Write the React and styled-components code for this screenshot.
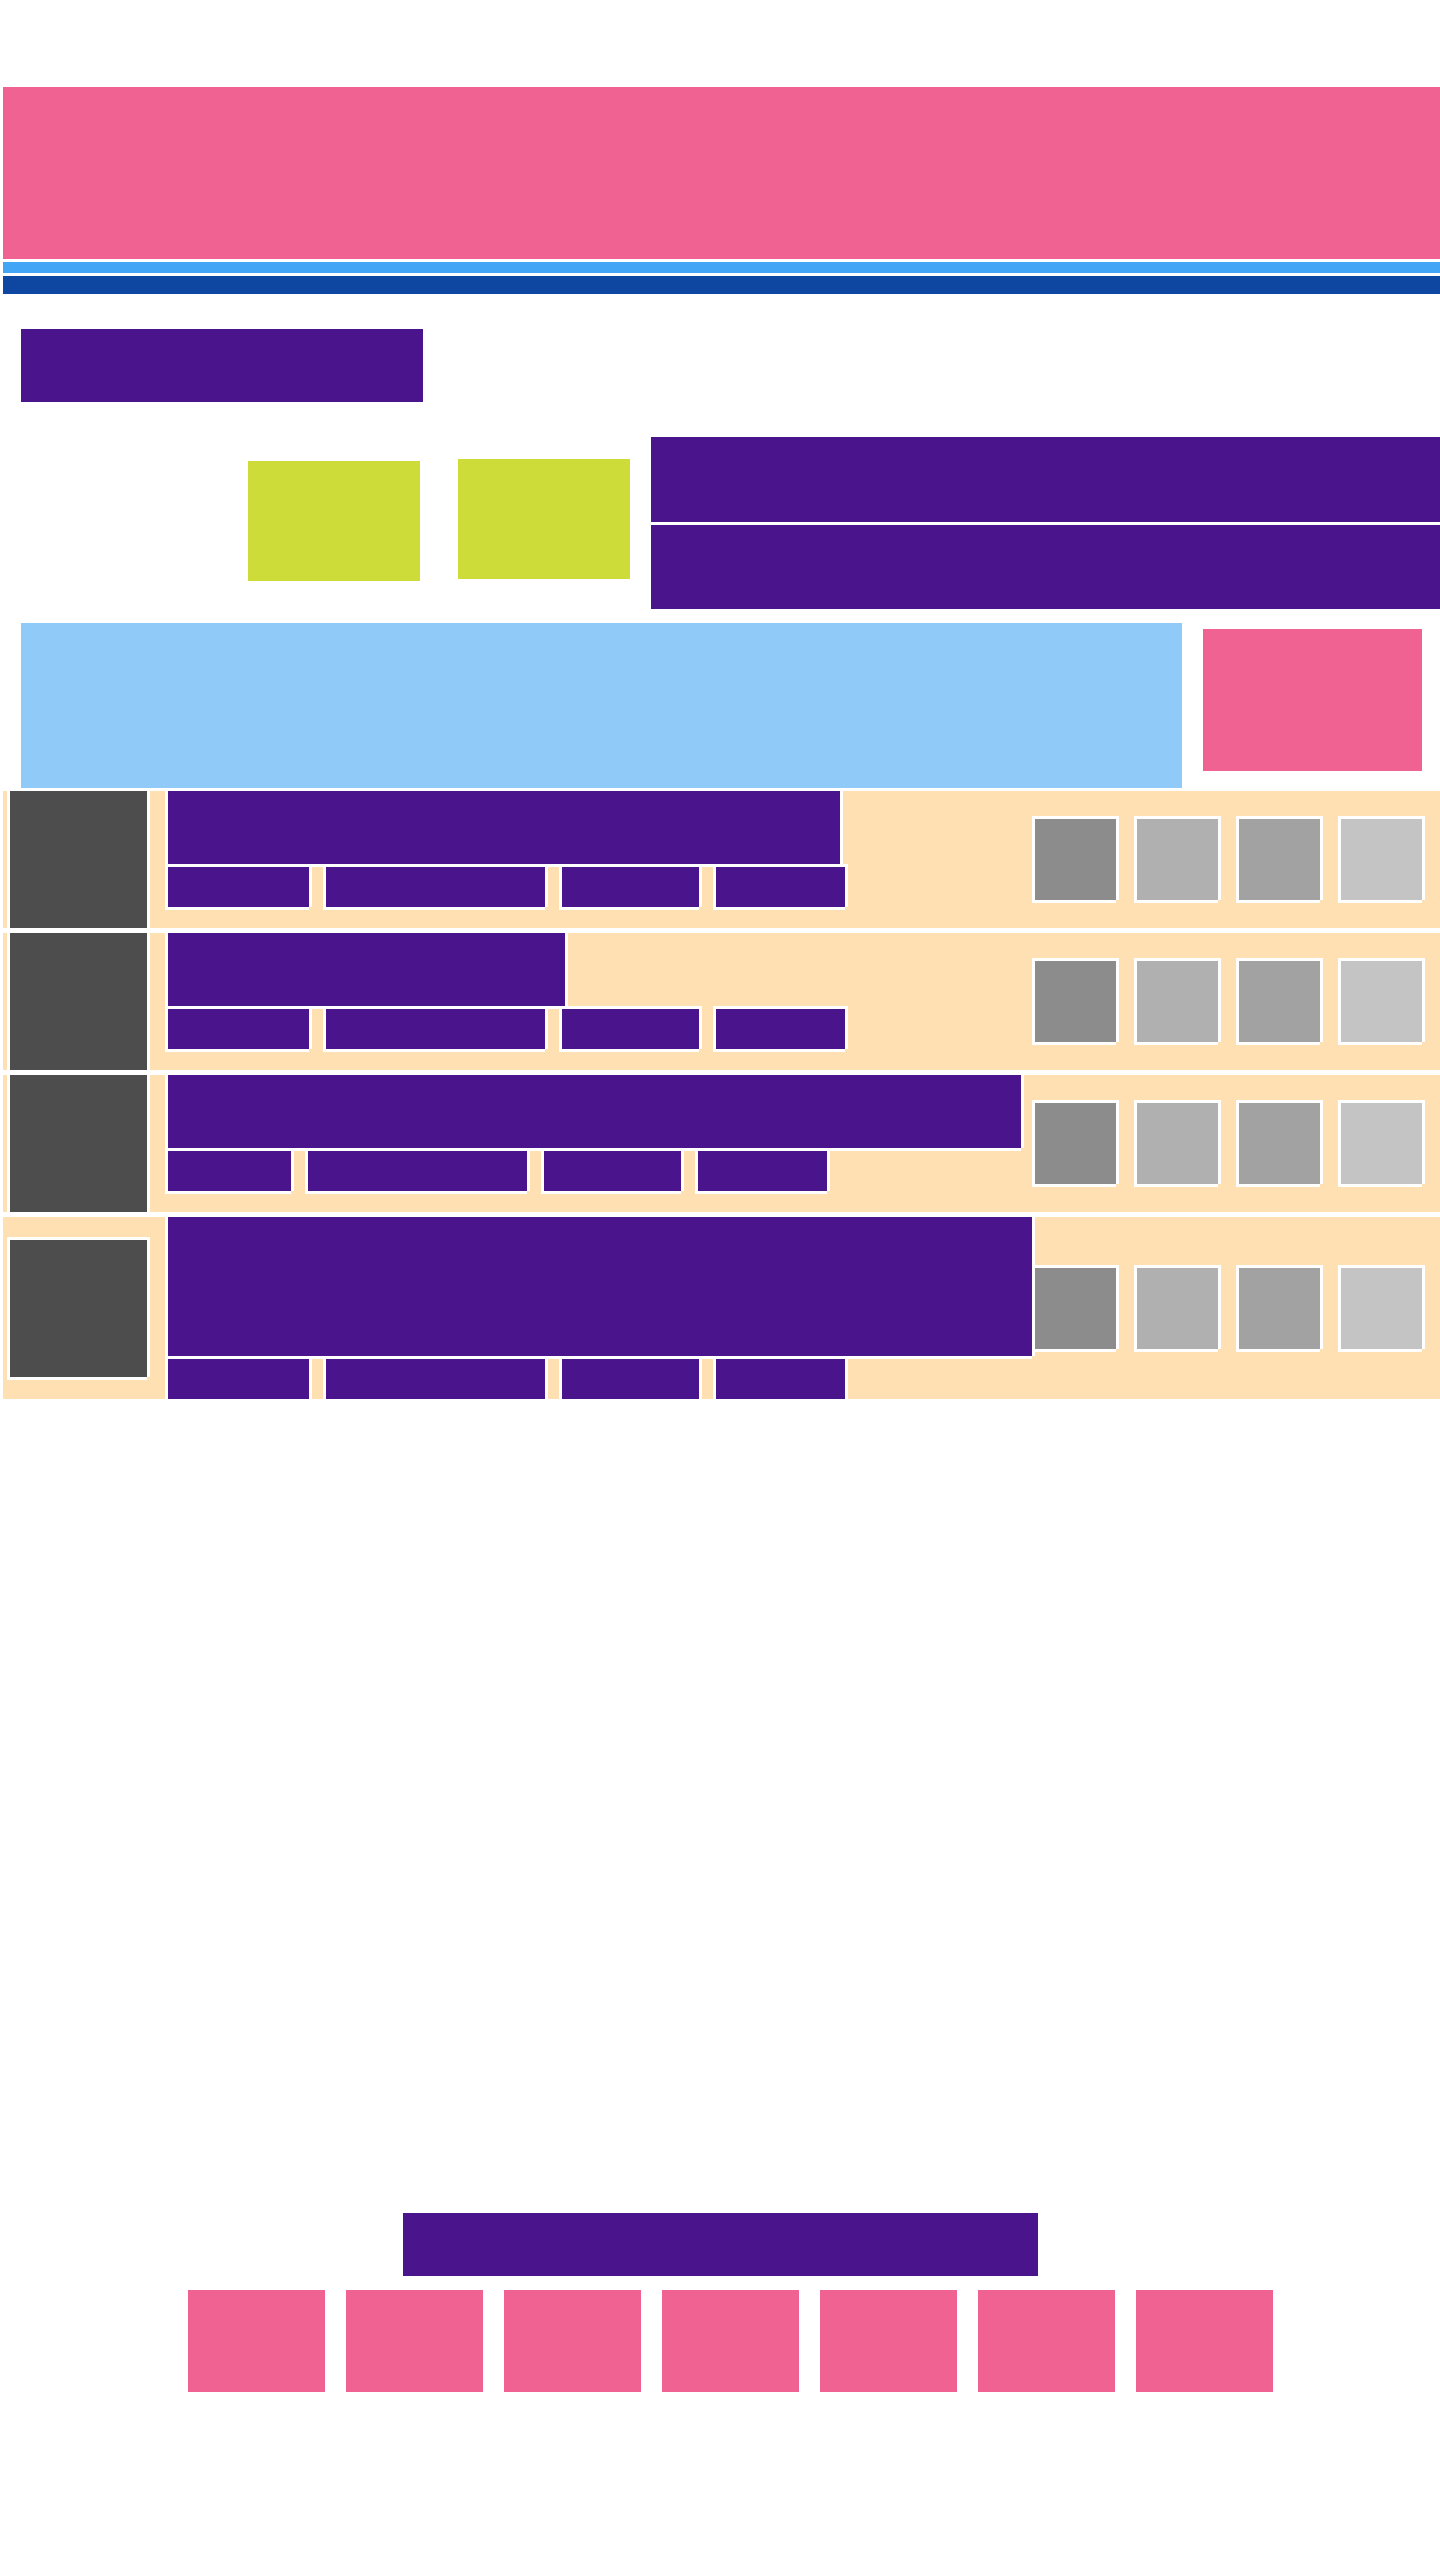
import React from "react";
import styled, { createGlobalStyle, css } from "styled-components";

const rows = [
  { titleWidth: 672, titleHeight: 73, tags: [141, 219, 137, 129] },
  { titleWidth: 397, titleHeight: 73, tags: [141, 219, 137, 129] },
  { titleWidth: 853, titleHeight: 73, tags: [123, 219, 137, 129] },
  { titleWidth: null, titleHeight: 139, tags: [141, 219, 137, 129] },
];

const thumbs = ["#8c8c8c", "#b0b0b0", "#a2a2a2", "#c4c4c4"];
const pages = [1, 2, 3, 4, 5, 6, 7];

const App = () => {
  return (
    <>
      <GlobalStyle />
      <Page>
        <Header />
        <Stripe $color="#42a5f5" $height={11} />
        <Stripe $color="#0d47a1" $height={18} />

        <Intro>
          <PageTitle />
        </Intro>

        <Feature>
          <Badge $offset={24} $left={245} />
          <Badge $offset={22} $left={38} />
          <Stack>
            <StackItem $height={85} />
            <StackItem $height={84} />
          </Stack>
        </Feature>

        <Hero>
          <Banner />
          <Promo />
        </Hero>

        <List>
          {rows.map((row, rowIndex) => {
            return (
              <Row key={rowIndex}>
                <Avatar />
                <Content>
                  <Title
                    $height={row.titleHeight}
                    style={row.titleWidth ? { width: `${row.titleWidth}px` } : undefined}
                  />
                  <Tags>
                    {row.tags.map((width, tagIndex) => (
                      <Tag key={tagIndex} style={{ width: `${width}px` }} />
                    ))}
                  </Tags>
                </Content>
                <Thumbs>
                  {thumbs.map((color, thumbIndex) => (
                    <Thumb key={thumbIndex} $color={color} />
                  ))}
                </Thumbs>
              </Row>
            );
          })}
        </List>

        <Footer>
          <FooterBar />
          <Pager>
            {pages.map((page) => (
              <PageButton key={page} />
            ))}
          </Pager>
        </Footer>
      </Page>
    </>
  );
};

export default App;

const GlobalStyle = createGlobalStyle`
  * {
    box-sizing: border-box;
  }
  body {
    margin: 0;
    background: #ffffff;
    font-family: "Liberation Sans", Arial, sans-serif;
  }
  #root {
    min-height: 2560px;
  }
`;

// white edge with the bottom-right corner left open
const edge = css`
  box-shadow: -3px -3px 0 #fff, 3px -3px 0 #fff, -3px 3px 0 #fff,
    3px 0 0 #fff, 0 3px 0 #fff;
`;

const Page = styled.div`
  width: 1440px;
  padding: 87px 0 0 3px;
`;

const Header = styled.header`
  height: 172px;
  background: #f06292;
`;

const Stripe = styled.div`
  margin-top: 3px;
  height: ${(p) => p.$height}px;
  background: ${(p) => p.$color};
`;

const Intro = styled.section`
  padding: 35px 0 0 18px;
`;

const PageTitle = styled.div`
  width: 402px;
  height: 73px;
  background: #4a148c;
`;

const Feature = styled.section`
  display: flex;
  align-items: flex-start;
  margin-top: 35px;
`;

const Badge = styled.div`
  width: 172px;
  height: 120px;
  margin-top: ${(p) => p.$offset}px;
  margin-left: ${(p) => p.$left}px;
  background: #cddc39;
`;

const Stack = styled.div`
  flex: 1;
  display: flex;
  flex-direction: column;
  gap: 3px;
  margin-left: 21px;
`;

const StackItem = styled.div`
  height: ${(p) => p.$height}px;
  background: #4a148c;
`;

const Hero = styled.section`
  display: flex;
  align-items: flex-start;
  gap: 21px;
  margin-top: 14px;
  padding: 0 18px 0 18px;
`;

const Banner = styled.div`
  flex: 1;
  height: 165px;
  background: #90caf9;
`;

const Promo = styled.div`
  width: 219px;
  height: 142px;
  margin-top: 6px;
  background: #f06292;
`;

const List = styled.section`
  display: flex;
  flex-direction: column;
  gap: 5px;
  margin-top: 3px;
`;

const Row = styled.div`
  display: flex;
  align-items: flex-start;
  padding: 0 18px 0 7px;
  background: #ffe0b2;
`;

const Avatar = styled.div`
  flex: none;
  align-self: center;
  width: 137px;
  height: 137px;
  margin-right: 21px;
  background: #4d4d4d;
  ${edge}
`;

const Content = styled.div`
  flex: 1;
  min-width: 0;
  display: flex;
  flex-direction: column;
  gap: 3px;
  margin-right: 3px;
`;

const Title = styled.div`
  height: ${(p) => p.$height}px;
  background: #4a148c;
  ${edge}
`;

const Tags = styled.div`
  display: flex;
  gap: 17px;
`;

const Tag = styled.div`
  height: 40px;
  background: #4a148c;
  ${edge}
`;

const Thumbs = styled.div`
  flex: none;
  align-self: center;
  display: flex;
  gap: 21px;
`;

const Thumb = styled.div`
  width: 81px;
  height: 81px;
  background: ${(p) => p.$color};
  ${edge}
`;

const Footer = styled.footer`
  display: flex;
  flex-direction: column;
  align-items: center;
  margin-left: -3px;
  padding-top: 814px;
`;

const FooterBar = styled.div`
  width: 635px;
  height: 63px;
  background: #4a148c;
`;

const Pager = styled.div`
  display: flex;
  margin-top: 14px;
`;

const PageButton = styled.div`
  width: 137px;
  height: 102px;
  margin-left: 21px;
  background: #f06292;
`;
